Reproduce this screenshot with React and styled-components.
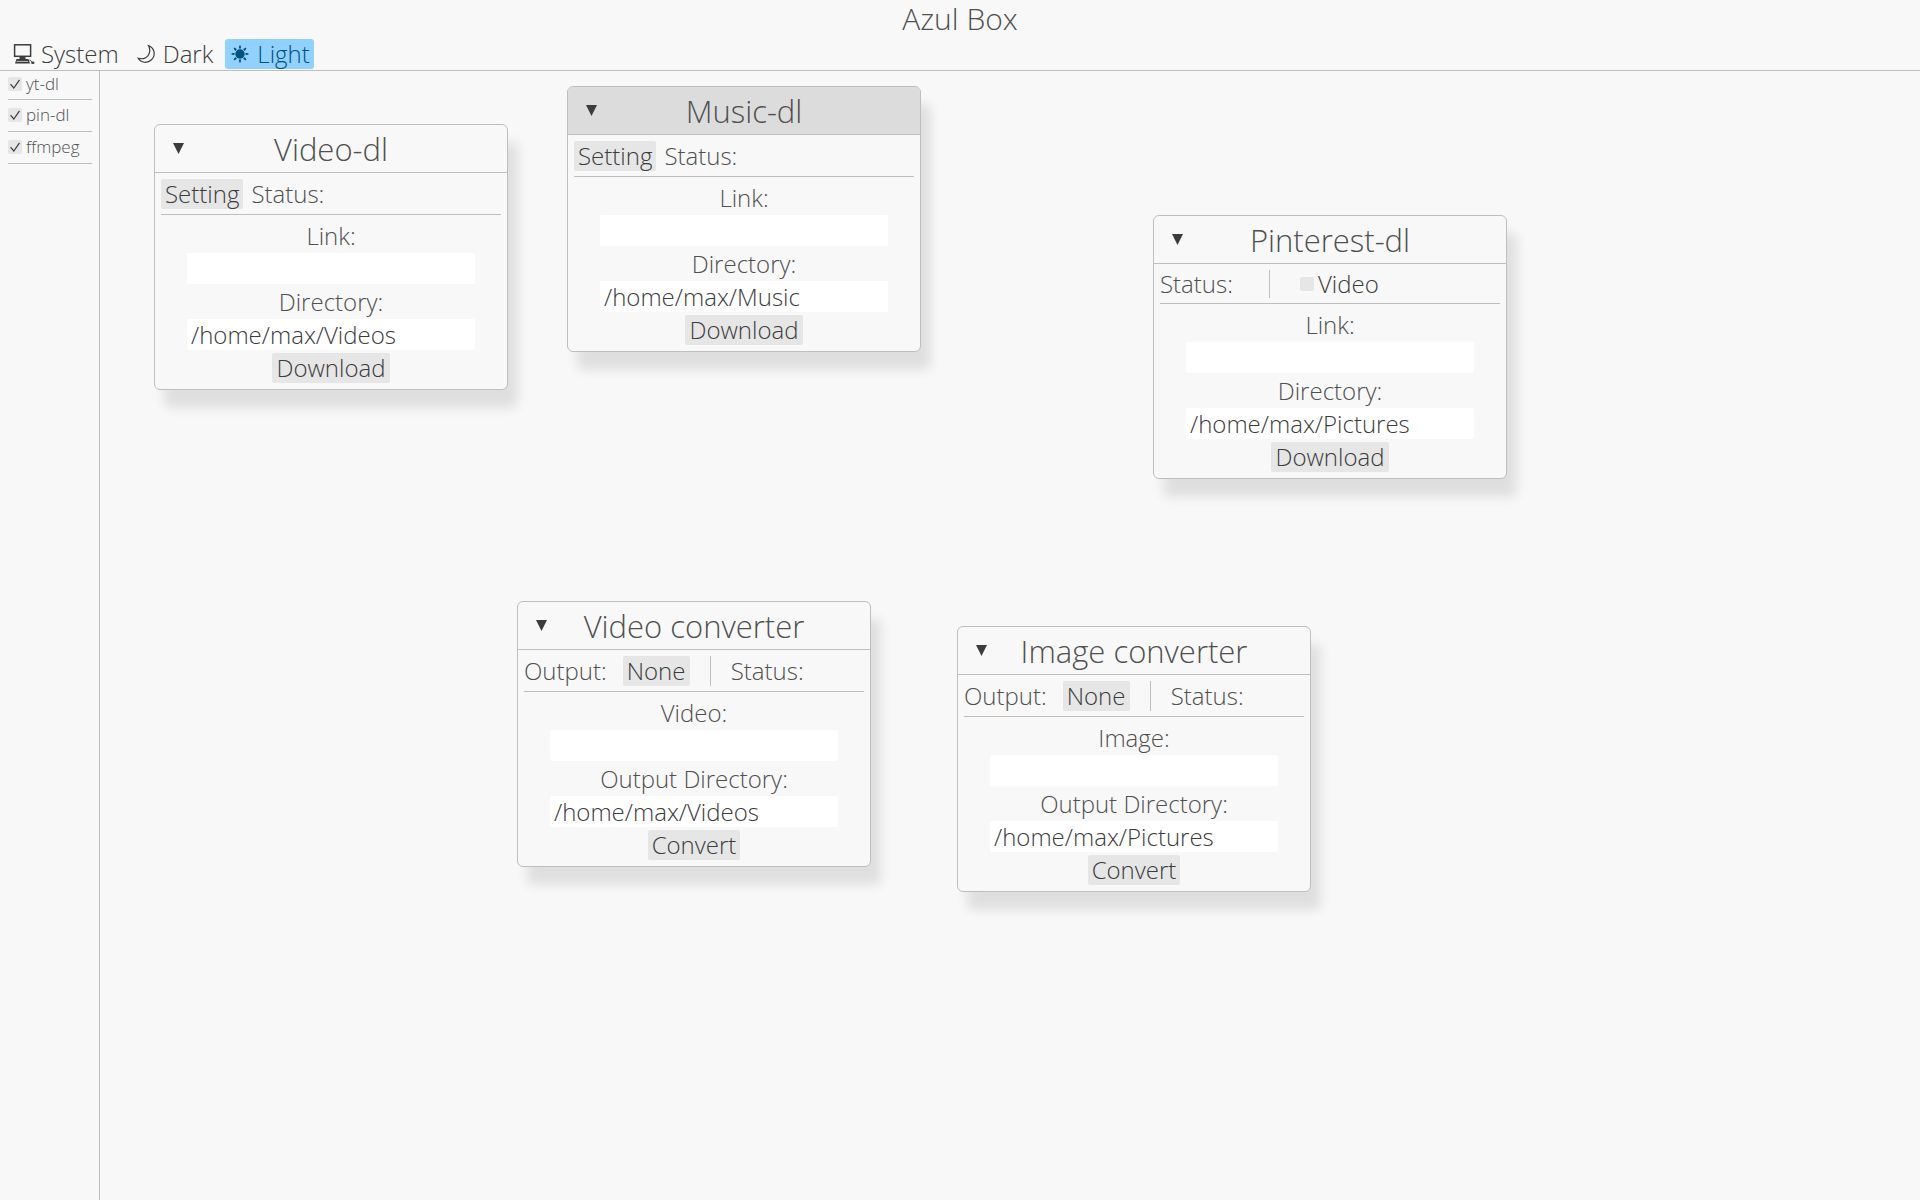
import React, { useId } from "react";
import styled, { createGlobalStyle } from "styled-components";

const GlobalStyle = createGlobalStyle`
  * { box-sizing: border-box; }
  body { margin: 0; background: #f8f8f8; color: #505050; }
  body, button, input, select {
    font-family: "Open Sans", "Noto Sans", sans-serif;
    font-weight: 300;
    font-size: 24px;
    line-height: 30px;
  }
`;

const Page = styled.div`
  min-height: 100vh;
  display: flex;
  flex-direction: column;
`;

const TopBar = styled.header`
  border-bottom: 1px solid #bebebe;
  padding-bottom: 1px;
`;

const AppTitle = styled.h1`
  margin: 0;
  padding-bottom: 2px;
  font-size: 30px;
  font-weight: 300;
  line-height: 37px;
  text-align: center;
`;

const ThemeSwitch = styled.nav`
  display: flex;
  gap: 8px;
  padding-left: 9px;
`;

const ThemeButton = styled.button`
  display: flex;
  align-items: center;
  gap: 6px;
  height: 30px;
  padding: 0 4px;
  border: 0;
  border-radius: 3px;
  background: ${(p) => (p.$active ? "#90d1ff" : "transparent")};
  color: ${(p) => (p.$active ? "#005080" : "#3c3c3c")};
`;

const Main = styled.div`
  flex: 1;
  display: flex;
`;

const Sidebar = styled.aside`
  width: 100px;
  padding: 0 7px 0 8px;
  border-right: 1px solid #bebebe;
`;

const SideItem = styled.div`
  height: 32px;
  padding-top: 3px;
  border-bottom: 1px solid #bebebe;
  &:first-child { height: 29px; padding-top: 1px; }
`;

const CheckLabel = styled.label`
  display: flex;
  align-items: center;
  gap: 4px;
  color: ${(p) => (p.$small ? "#505050" : "#3c3c3c")};
  font-size: ${(p) => (p.$small ? "17px" : "24px")};
  line-height: ${(p) => (p.$small ? "23px" : "28px")};
`;

const CheckHolder = styled.span`
  display: grid;
  flex: none;
  > * { grid-area: 1 / 1; }
`;

const CheckInput = styled.input`
  appearance: none;
  width: 14px;
  height: 14px;
  margin: 0;
  border-radius: 2px;
  background: #e6e6e6;
`;

const Workspace = styled.main`
  position: relative;
  flex: 1;
`;

const Window = styled.section`
  position: absolute;
  width: 354px;
  border: 1px solid #bebebe;
  border-radius: 6px;
  background: #f8f8f8;
  box-shadow: 10px 18px 12px rgba(0, 0, 0, 0.1);
`;

const WindowHeader = styled.header`
  display: grid;
  grid-template-columns: 1fr auto 1fr;
  align-items: center;
  height: 48px;
  border-bottom: 1px solid #bebebe;
  border-radius: 5px 5px 0 0;
  background: ${(p) => (p.$focused ? "#dcdcdc" : "transparent")};
`;

const WindowTitle = styled.h2`
  margin: 0;
  font-size: 31px;
  font-weight: 300;
  line-height: 46px;
`;

const CollapseButton = styled.button`
  display: flex;
  justify-self: start;
  margin-left: 14px;
  padding: 4px;
  border: 0;
  background: transparent;
  color: #3c3c3c;
`;

const WindowBody = styled.div`
  padding: 6px;
`;

const OptionRow = styled.div`
  display: flex;
  align-items: center;
  padding-bottom: 5px;
  margin-bottom: 6px;
  border-bottom: 1px solid #bebebe;
  gap: ${(p) => p.$gap};
`;

const OptionText = styled.span`
  line-height: 28px;
`;

const Divider = styled.span`
  align-self: stretch;
  width: 1px;
  background: #bebebe;
  margin: 0 ${(p) => p.$after} 0 ${(p) => p.$before};
`;

const Button = styled.button`
  height: 30px;
  padding: 0 4px;
  border: 0;
  border-radius: 2px;
  background: #e6e6e6;
  color: #3c3c3c;
`;

const FormatSelect = styled.select`
  appearance: none;
  height: 30px;
  padding: 0 4px;
  border: 0;
  border-radius: 2px;
  background: #e6e6e6;
  color: #3c3c3c;
`;

const Form = styled.div`
  display: flex;
  flex-direction: column;
  align-items: center;
  gap: 3px;
`;

const FieldLabel = styled.label`
  line-height: 29px;
`;

const TextField = styled.input`
  width: 288px;
  height: 31px;
  padding: 0 4px;
  border: 0;
  border-radius: 2px;
  background: #ffffff;
  color: #3c3c3c;
`;

const ComputerIcon = () => (
  <svg width="22" height="22" viewBox="0 0 22 22" fill="none" stroke="currentColor" aria-hidden="true">
    <rect x="1.6" y="1.8" width="16" height="11.5" strokeWidth="1.5" />
    <path d="M6.500 14h6v2.200h-6z" fill="currentColor" stroke="none" />
    <path d="M3.500 16h12l1.500 4.500H2z" fill="currentColor" stroke="none" />
    <path d="M3.500 18.400h11.500" stroke="#f8f8f8" strokeWidth="0.7" />
    <path d="M16.500 17c1.200 .2 1.800 .8 2 2" />
    <ellipse cx="19.800" cy="19.700" rx="1.700" ry="1.200" fill="currentColor" stroke="none" />
  </svg>
);

const MoonIcon = () => (
  <svg width="22" height="22" viewBox="0 0 22 22" fill="none" stroke="currentColor" strokeWidth="1.2" aria-hidden="true">
    <path d="M13.500 2.600C19.800 5 21 12.500 16.500 16.800C12.300 20.600 6 20 3.200 15.300C7 16.300 11 15.300 13.200 12.300C15.200 9.300 15.200 6 13.500 2.600z" />
  </svg>
);

const SunIcon = () => (
  <svg width="22" height="22" viewBox="0 0 22 22" fill="currentColor" aria-hidden="true">
    <circle cx="11" cy="11" r="4.700" />
    {[0, 45, 90, 135, 180, 225, 270, 315].map((a) => (
      <path key={a} d="M9.900 5.500L10.300 2.600h1.400L12.100 5.500z" transform={`rotate(${a} 11 11)`} />
    ))}
  </svg>
);

function Check({ label, checked, small }) {
  return (
    <CheckLabel $small={small}>
      <CheckHolder>
        <CheckInput type="checkbox" defaultChecked={checked} />
        {checked && (
          <svg width="14" height="14" viewBox="0 0 14 14" fill="none" stroke="#3c3c3c" strokeWidth="1.2" pointerEvents="none" aria-hidden="true">
            <path d="M2.500 7.200L5.800 11L11.500 2.800" />
          </svg>
        )}
      </CheckHolder>
      {label}
    </CheckLabel>
  );
}

const Place = {
  video: styled(Window)`left: 54px; top: 53px;`,
  music: styled(Window)`left: 467px; top: 15px;`,
  pinterest: styled(Window)`left: 1053px; top: 144px;`,
  videoConverter: styled(Window)`left: 417px; top: 530px;`,
  imageConverter: styled(Window)`left: 857px; top: 555px;`,
};

function ToolWindow({ place, title, focused, options, optionGap = "8px", source, target, path, action }) {
  const id = useId();
  const Frame = Place[place];
  return (
    <Frame aria-labelledby={`${id}-title`}>
      <WindowHeader $focused={focused}>
        <CollapseButton type="button" aria-label={title}>
          <svg width="11" height="11" viewBox="0 0 11 11" fill="currentColor" aria-hidden="true">
            <path d="M0 0h11L5.500 11z" />
          </svg>
        </CollapseButton>
        <WindowTitle id={`${id}-title`}>{title}</WindowTitle>
      </WindowHeader>
      <WindowBody>
        <OptionRow $gap={optionGap}>{options}</OptionRow>
        <Form>
          <FieldLabel htmlFor={`${id}-source`}>{source}</FieldLabel>
          <TextField id={`${id}-source`} type="text" />
          <FieldLabel htmlFor={`${id}-target`}>{target}</FieldLabel>
          <TextField id={`${id}-target`} type="text" defaultValue={path} />
          <Button type="button">{action}</Button>
        </Form>
      </WindowBody>
    </Frame>
  );
}

const DownloadOptions = () => (
  <>
    <Button type="button">Setting</Button>
    <OptionText>Status:</OptionText>
  </>
);

function ConverterOptions() {
  const id = useId();
  return (
    <>
      <OptionText as="label" htmlFor={id}>Output:</OptionText>
      <FormatSelect id={id}>
        <option>None</option>
      </FormatSelect>
      <Divider $before="4px" $after="4px" />
      <OptionText>Status:</OptionText>
    </>
  );
}

const PinterestOptions = () => (
  <>
    <OptionText>Status:</OptionText>
    <Divider $before="20px" $after="14px" />
    <Check label="Video" />
  </>
);

export default function App() {
  return (
    <Page>
      <GlobalStyle />
      <TopBar>
        <AppTitle>Azul Box</AppTitle>
        <ThemeSwitch>
          <ThemeButton type="button"><ComputerIcon />System</ThemeButton>
          <ThemeButton type="button"><MoonIcon />Dark</ThemeButton>
          <ThemeButton type="button" $active><SunIcon />Light</ThemeButton>
        </ThemeSwitch>
      </TopBar>
      <Main>
        <Sidebar>
          <SideItem><Check small checked label="yt-dl" /></SideItem>
          <SideItem><Check small checked label="pin-dl" /></SideItem>
          <SideItem><Check small checked label="ffmpeg" /></SideItem>
        </Sidebar>
        <Workspace>
          <ToolWindow place="video" title="Video-dl" options={<DownloadOptions />} source="Link:" target="Directory:" path="/home/max/Videos" action="Download" />
          <ToolWindow place="music" title="Music-dl" focused options={<DownloadOptions />} source="Link:" target="Directory:" path="/home/max/Music" action="Download" />
          <ToolWindow place="pinterest" title="Pinterest-dl" optionGap="16px" options={<PinterestOptions />} source="Link:" target="Directory:" path="/home/max/Pictures" action="Download" />
          <ToolWindow place="videoConverter" title="Video converter" optionGap="16px" options={<ConverterOptions />} source="Video:" target="Output Directory:" path="/home/max/Videos" action="Convert" />
          <ToolWindow place="imageConverter" title="Image converter" optionGap="16px" options={<ConverterOptions />} source="Image:" target="Output Directory:" path="/home/max/Pictures" action="Convert" />
        </Workspace>
      </Main>
    </Page>
  );
}
